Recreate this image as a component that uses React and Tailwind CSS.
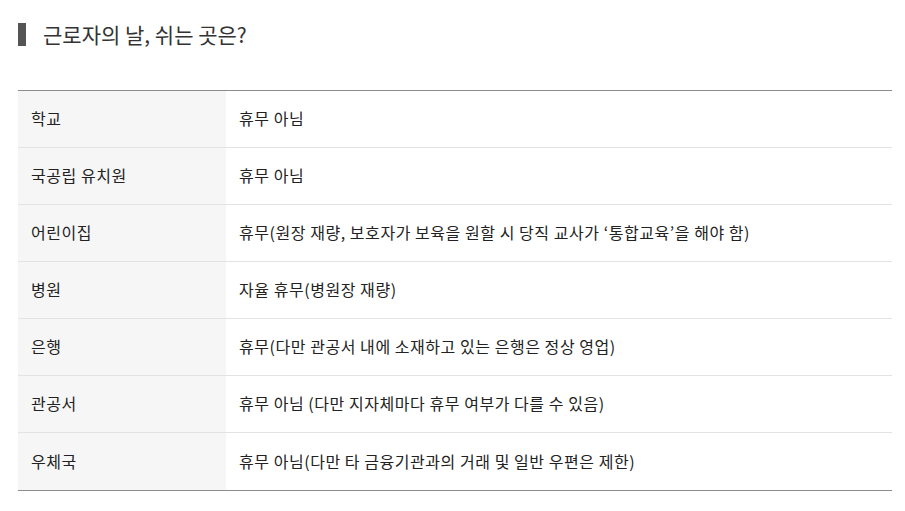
import React from 'react';

const rows = [
  ['학교', '휴무 아님'],
  ['국공립 유치원', '휴무 아님'],
  ['어린이집', '휴무(원장 재량, 보호자가 보육을 원할 시 당직 교사가 ‘통합교육’을 해야 함)'],
  ['병원', '자율 휴무(병원장 재량)'],
  ['은행', '휴무(다만 관공서 내에 소재하고 있는 은행은 정상 영업)'],
  ['관공서', '휴무 아님 (다만 지자체마다 휴무 여부가 다를 수 있음)'],
  ['우체국', '휴무 아님(다만 타 금융기관과의 거래 및 일반 우편은 제한)'],
];

const App = () => {
  return (
    <div
      className="w-[905px] h-[511px] bg-white pl-[18px] pr-[13px] pt-[22px] text-[#222]"
      style={{ fontFamily: '"Noto Sans CJK KR", "Noto Sans", sans-serif' }}
    >
      {/* Title */}
      <div className="flex items-center gap-[17px] h-[24px]">
        <div className="w-[8px] h-[23px] bg-[#555]" />
        <h2 className="text-[21px] leading-[24px] text-[#333] font-normal">
          근로자의 날, 쉬는 곳은?
        </h2>
      </div>

      {/* Table */}
      <div className="mt-[44px] border-t border-b border-[#8c8c8c]">
        {rows.map(([place, note], i) => (
          <div
            key={place}
            className={`flex h-[57px] text-[16px] leading-[20px] tracking-[0.55px] ${i < rows.length - 1 ? 'border-b border-[#e3e3e3]' : ''}`}
          >
            <div className="w-[208px] shrink-0 bg-[#f6f6f6] flex items-center px-[13px] pb-[2px]">{place}</div>
            <div className="flex-1 flex items-center px-[13px] pb-[2px]">{note}</div>
          </div>
        ))}
      </div>
    </div>
  );
};

export default App;
